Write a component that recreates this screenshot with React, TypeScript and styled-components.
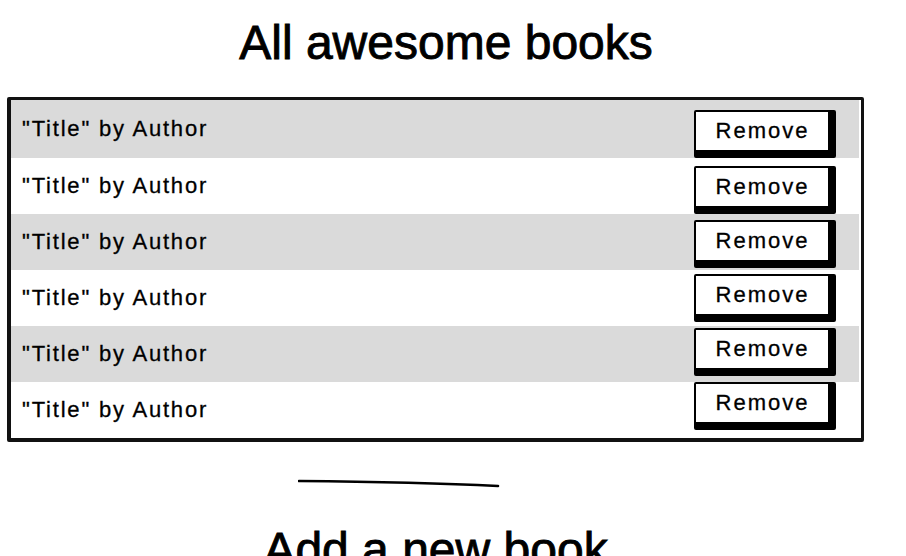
import React from "react";
import styled, { createGlobalStyle } from "styled-components";

const GlobalStyle = createGlobalStyle`
  html, body {
    margin: 0;
    padding: 0;
    background: #ffffff;
    font-family: "Liberation Sans", Arial, sans-serif;
    color: #000;
    overflow: hidden;
  }
`;

const Page = styled.div`
  width: 857px;
  padding-left: 7px;
  display: flex;
  flex-direction: column;
`;

const Heading = styled.h1<{ $shift?: number }>`
  margin: 0;
  font-family: "Liberation Sans", Arial, sans-serif;
  font-weight: 400;
  font-size: 48px;
  line-height: 48px;
  text-align: center;
  padding-left: ${(p) => p.$shift ?? 0}px;
  color: #000;
  -webkit-text-stroke: 0.9px #000;
`;

const TopHeading = styled(Heading)`
  margin-top: 19px;
`;

const BottomHeading = styled(Heading)`
  margin-top: 38px;
`;

const Table = styled.div`
  margin-top: 30px;
  height: 345px;
  box-sizing: border-box;
  border-style: solid;
  border-color: #111;
  border-width: 3px 3px 4px 4px;
  border-radius: 2px;
  display: flex;
  flex-direction: column;
`;

const Row = styled.div<{ $alt: boolean }>`
  flex: 1;
  display: flex;
  align-items: flex-start;
  justify-content: space-between;
  padding: 0 23px 0 11px;
  background: ${(p) => (p.$alt ? "#dadada" : "#ffffff")};
  margin-right: 2px;
`;

const BookText = styled.span`
  align-self: center;
  font-size: 22px;
  letter-spacing: 1.8px;
  color: #000;
  -webkit-text-stroke: 0.3px #000;
`;

const RemoveButton = styled.button<{ $offset: number }>`
  margin-top: ${(p) => p.$offset}px;
  width: 142px;
  height: 48px;
  box-sizing: border-box;
  background: #fff;
  border-style: solid;
  border-color: #000;
  border-width: 2px 8px 8px 2px;
  border-radius: 2px;
  font-family: "Liberation Sans", Arial, sans-serif;
  font-size: 22px;
  letter-spacing: 2px;
  padding: 0 0 0 1px;
  color: #000;
  -webkit-text-stroke: 0.3px #000;
  line-height: 1;
  cursor: pointer;
`;

const Separator = styled.svg`
  display: block;
  margin-top: 36px;
  margin-left: 291px;
`;

const books = Array.from({ length: 6 }, () => ({ title: "Title", author: "Author" }));

export default function App() {
  return (
    <>
      <GlobalStyle />
      <Page>
        <TopHeading $shift={21}>All awesome books</TopHeading>
        <Table>
          {books.map((b, i) => (
            <Row key={i} $alt={i % 2 === 0}>
              <BookText>
                "{b.title}" by {b.author}
              </BookText>
              <RemoveButton $offset={10 - 2 * i}>Remove</RemoveButton>
            </Row>
          ))}
        </Table>
        <Separator width="202" height="10" viewBox="0 0 202 10">
          <path
            d="M1 3 C 60 3.5, 140 5, 200 8"
            stroke="#000"
            strokeWidth="2.6"
            fill="none"
            strokeLinecap="round"
          />
        </Separator>
        <BottomHeading>Add a new book</BottomHeading>
      </Page>
    </>
  );
}
